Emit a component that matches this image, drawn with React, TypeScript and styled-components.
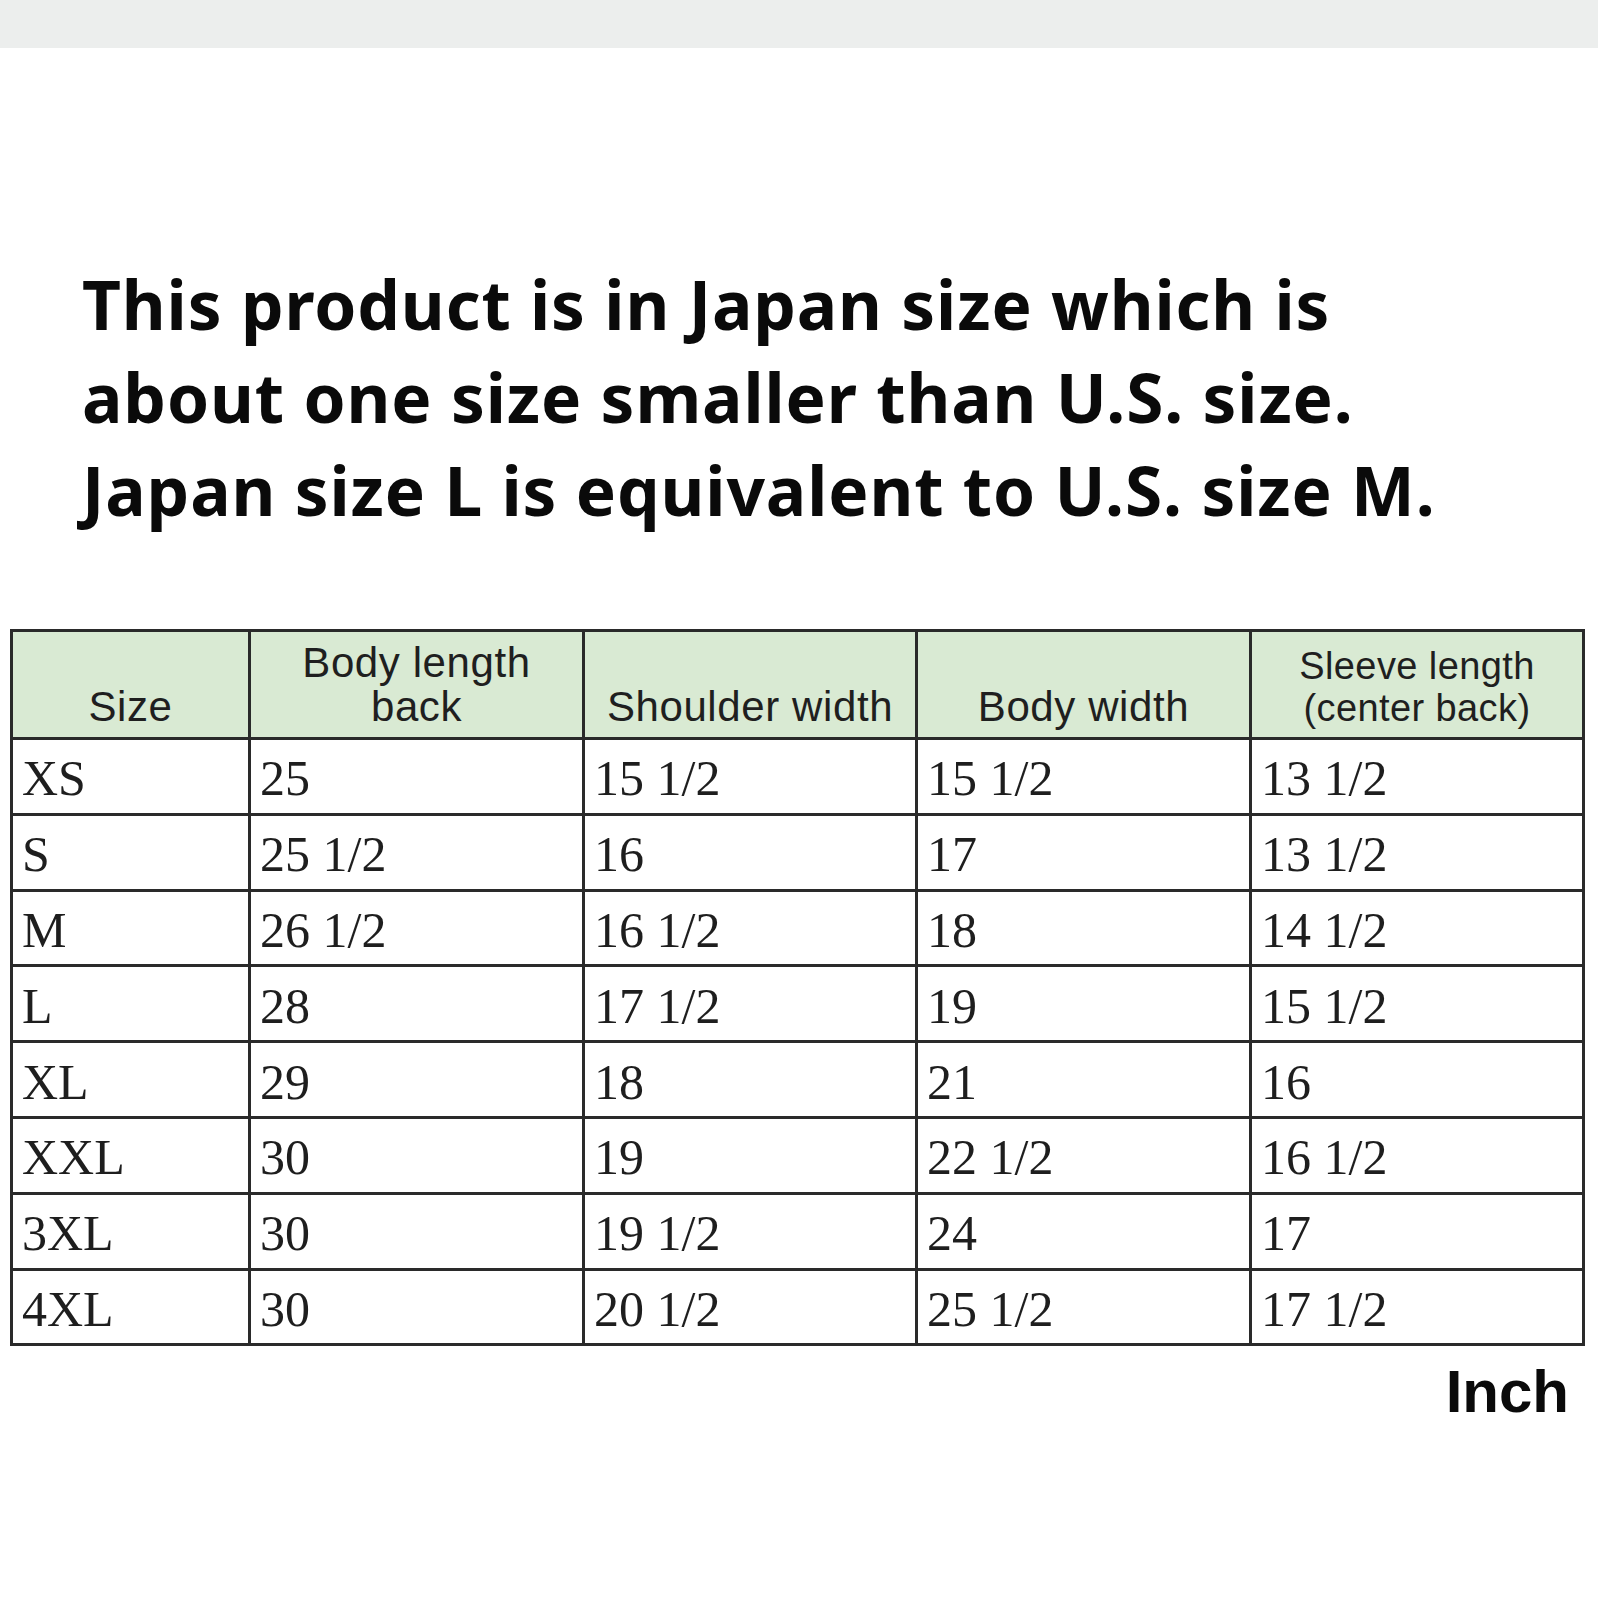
import styled, { createGlobalStyle } from "styled-components";

const GlobalStyle = createGlobalStyle`
  html, body {
    margin: 0;
    padding: 0;
    background: #fff;
  }
`;

const Page = styled.div`
  width: 1598px;
  height: 1600px;
  display: flex;
  flex-direction: column;
  background: #fff;
  overflow: hidden;
`;

const TopBar = styled.div`
  height: 48px;
  background: #eceeed;
  flex-shrink: 0;
`;

const Notice = styled.p`
  margin: 210px 0 0 82px;
  font-family: "Noto Sans", "Open Sans", sans-serif;
  font-weight: 700;
  font-size: 67.5px;
  line-height: 93px;
  letter-spacing: 0.9px;
  color: #0a0a0a;
`;

const Line = styled.span`
  display: block;
  white-space: nowrap;
`;

const SizeTable = styled.table`
  margin: 92px 0 0 10px;
  width: 1572px;
  border-collapse: collapse;
  table-layout: fixed;
  border: 3px solid #2a2a2a;
`;

const HeadCell = styled.th<{ $small?: boolean }>`
  background: #d9ead3;
  border: 3px solid #2a2a2a;
  height: 97px;
  padding: 0 0 8px;
  vertical-align: bottom;
  text-align: center;
  font-family: "Liberation Sans", Arial, sans-serif;
  font-weight: 400;
  font-size: ${(p) => (p.$small ? "38px" : "42px")};
  line-height: ${(p) => (p.$small ? "42px" : "44px")};
  letter-spacing: ${(p) => (p.$small ? "0.4px" : "0.6px")};
  color: #1f1f1f;
`;

const Cell = styled.td`
  border: 3px solid #2a2a2a;
  height: 68.8px;
  padding: 4px 0 0 9px;
  vertical-align: middle;
  text-align: left;
  font-family: "Liberation Serif", "Times New Roman", serif;
  font-size: 50px;
  line-height: 1;
  color: #1e1e1e;
  white-space: nowrap;
`;

const Unit = styled.div`
  margin: 16px 29px 0 0;
  text-align: right;
  font-family: "Liberation Sans", Arial, sans-serif;
  font-weight: 700;
  font-size: 60px;
  line-height: 60px;
  color: #0a0a0a;
`;

const columns: { label: string[]; width: number; small?: boolean }[] = [
  { label: ["Size"], width: 238 },
  { label: ["Body length", "back"], width: 334 },
  { label: ["Shoulder width"], width: 333 },
  { label: ["Body width"], width: 334 },
  { label: ["Sleeve length", "(center back)"], width: 333, small: true },
];

const rows: string[][] = [
  ["XS", "25", "15 1/2", "15 1/2", "13 1/2"],
  ["S", "25 1/2", "16", "17", "13 1/2"],
  ["M", "26 1/2", "16 1/2", "18", "14 1/2"],
  ["L", "28", "17 1/2", "19", "15 1/2"],
  ["XL", "29", "18", "21", "16"],
  ["XXL", "30", "19", "22 1/2", "16 1/2"],
  ["3XL", "30", "19 1/2", "24", "17"],
  ["4XL", "30", "20 1/2", "25 1/2", "17 1/2"],
];

export default function App() {
  return (
    <Page>
      <GlobalStyle />
      <TopBar />
      <Notice>
        <Line>This product is in Japan size which is</Line>
        <Line>about one size smaller than U.S. size.</Line>
        <Line>Japan size L is equivalent to U.S. size M.</Line>
      </Notice>
      <SizeTable>
        <colgroup>
          {columns.map((c) => (
            <col key={c.label.join(" ")} style={{ width: c.width }} />
          ))}
        </colgroup>
        <thead>
          <tr>
            {columns.map((c) => (
              <HeadCell key={c.label.join(" ")} $small={c.small}>
                {c.label.map((l) => (
                  <div key={l}>{l}</div>
                ))}
              </HeadCell>
            ))}
          </tr>
        </thead>
        <tbody>
          {rows.map((r) => (
            <tr key={r[0]}>
              {r.map((v, i) => (
                <Cell key={i}>{v}</Cell>
              ))}
            </tr>
          ))}
        </tbody>
      </SizeTable>
      <Unit>Inch</Unit>
    </Page>
  );
}
